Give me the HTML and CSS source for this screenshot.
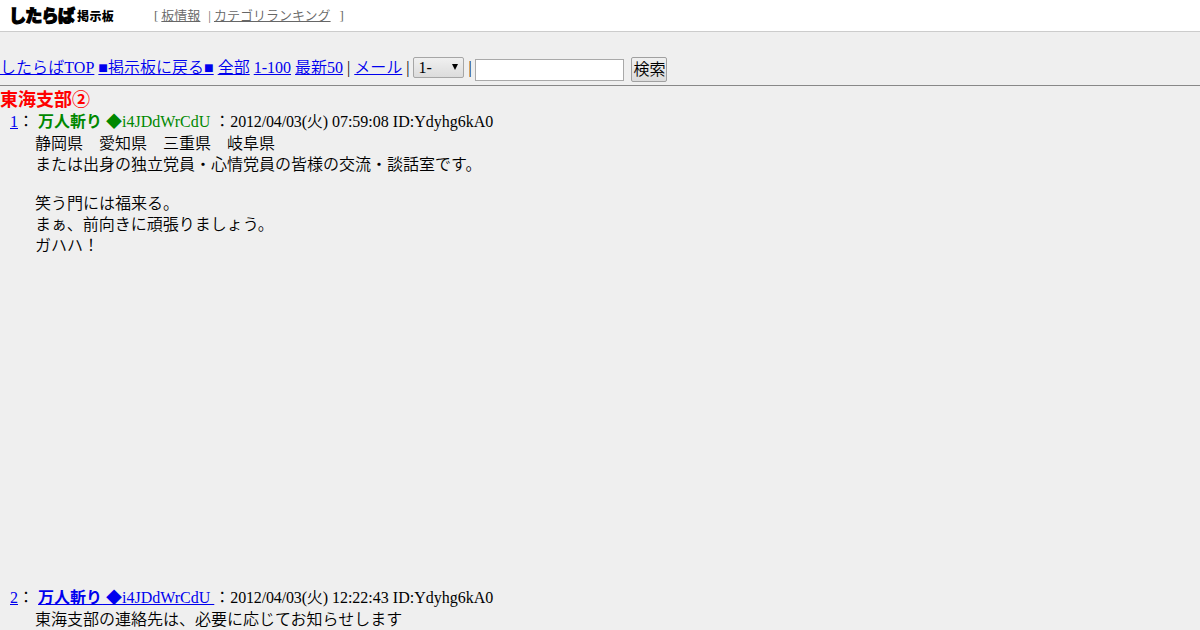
FILE: index.html
```
<!DOCTYPE html>
<html lang="ja">
<head>
    <meta charset="UTF-8">
    <title>東海支部②</title>
    <link rel="stylesheet" href="styles.css">
</head>
<body>
    <div class="header">
        <a class="logo" href="#"><span class="logo-main">したらば</span><span class="logo-sub">掲示板</span></a>
        <div class="header-menu">
            <span>[</span>
            <a class="menu-info" href="#">板情報</a>
            <span class="menu-sep">|</span>
            <a class="menu-rank" href="#">カテゴリランキング</a>
            <span>]</span>
        </div>
    </div>

    <form class="nav">
        <div class="nav-links">
            <a class="top" href="#">したらばTOP</a>
            <a href="#">■掲示板に戻る■</a>
            <a href="#">全部</a>
            <a href="#">1-100</a>
            <a href="#">最新50</a>
            |
            <a href="#">メール</a>
            |
        </div>
        <button type="button" class="range">1-<svg width="6" height="6" viewBox="0 0 6 6"><path d="M0 0h6L3 6z"/></svg></button>
        <span class="nav-sep">|</span>
        <input type="text" class="search" name="word">
        <button type="submit" class="search-btn">検索</button>
    </form>

    <h1 class="title">東海支部②</h1>

    <dl class="thread">
        <dt><a href="#">1</a>： <span class="name"><b>万人斬り</b> ◆i4JDdWrCdU </span>：<span class="date">2012/04/03(火)</span> 07:59:08 ID:Ydyhg6kA0</dt>
        <dd class="first">
            <p>静岡県　愛知県　三重県　岐阜県<br>または出身の独立党員・心情党員の皆様の交流・談話室です。</p>
            <p>笑う門には福来る。<br>まぁ、前向きに頑張りましょう。<br>ガハハ！</p>
        </dd>
        <dt><a href="#">2</a>： <a href="#"><b>万人斬り</b> ◆i4JDdWrCdU </a>：<span class="date">2012/04/03(火)</span> 12:22:43 ID:Ydyhg6kA0</dt>
        <dd>
            <p>東海支部の連絡先は、必要に応じてお知らせします</p>
        </dd>
    </dl>
</body>
</html>
```
FILE: styles.css
```
body {
    margin: 0;
    height: 630px;
    overflow: hidden;
    background: #efefef;
    color: #000;
    font-family: "Liberation Serif", "Noto Sans CJK JP", serif;
    font-size: 16px;
    font-weight: 350;
    line-height: 21px;
}
a {
    color: #0000ee;
}
b {
    font-weight: 700;
}

/* header */
.header {
    display: flex;
    align-items: center;
    height: 31px;
    padding-left: 9px;
    background: #fff;
    border-bottom: 1px solid #ccc;
}
.logo {
    display: flex;
    align-items: center;
    width: 145px;
    color: #000;
    font-family: "Noto Sans CJK JP", sans-serif;
    font-weight: 900;
    text-decoration: none;
    white-space: nowrap;
}
.logo-main {
    width: 68px;
    margin-top: -2px;
    font-size: 17px;
    letter-spacing: -0.7px;
    -webkit-text-stroke: 1.2px #000;
}
.logo-sub {
    font-size: 12px;
    letter-spacing: 0.4px;
}
.header-menu {
    display: flex;
    color: #666;
    font-size: 13px;
}
.header-menu a {
    color: #666;
}
.menu-info {
    margin-left: 3px;
}
.menu-sep {
    margin: 0 3px 0 8px;
}
.menu-rank {
    margin-right: 9px;
}

/* thread navigation */
.nav {
    display: flex;
    align-items: flex-start;
    box-sizing: border-box;
    height: 54px;
    padding-top: 25px;
    border-bottom: 1px solid #888;
    white-space: nowrap;
}
.top {
    letter-spacing: 0.06px;
}
.range {
    display: flex;
    align-items: center;
    justify-content: space-between;
    box-sizing: border-box;
    width: 51px;
    height: 21px;
    margin-left: 4px;
    padding: 0 5px 0 4px;
    border: 1px solid #a6a6a6;
    border-radius: 2px;
    background: linear-gradient(#f0f0f0, #dcdcdc);
    color: #000;
    font: inherit;
}
.range svg {
    margin-top: -2px;
}
.nav-sep {
    width: 4px;
    margin: 0 3px 0 4px;
}
.search {
    box-sizing: border-box;
    width: 149px;
    height: 22px;
    margin: 2px 7px 0 0;
    border: 1px solid #a9a9a9;
    background: #fff;
}
.search-btn {
    box-sizing: border-box;
    width: 36px;
    height: 25px;
    padding: 0 1px;
    border: 1px solid #a0a0a0;
    border-radius: 2px;
    background: linear-gradient(#f0f0f0, #dcdcdc);
    color: #000;
    font: inherit;
}

/* posts */
.title {
    margin: 0;
    padding-top: 3px;
    color: #ff0000;
    font-size: 18px;
    line-height: 22px;
}
.thread {
    margin: 0;
    padding-left: 10px;
}
.thread dd {
    margin: 0 0 0 25px;
    padding-top: 1px;
}
.thread .first {
    height: 454px;
}
.thread p {
    margin: 0 0 18px;
}
.name {
    color: #008800;
}
.date {
    letter-spacing: -0.15px;
}
```
